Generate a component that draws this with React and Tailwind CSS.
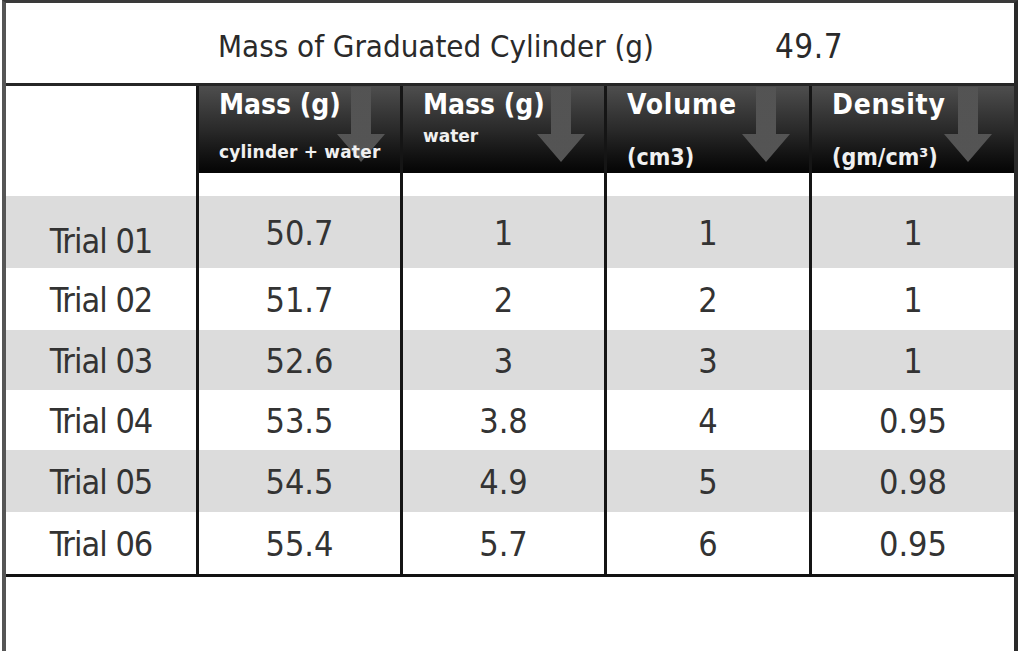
import React from "react";

const Arrow = ({ className }) => (
  <svg
    className={className}
    width="48"
    height="75"
    viewBox="0 0 48 75"
    aria-hidden="true"
  >
    <defs>
      <linearGradient id="ag" x1="0" y1="0" x2="0" y2="1">
        <stop offset="0" stopColor="#555555" />
        <stop offset="1" stopColor="#666666" />
      </linearGradient>
    </defs>
    <path d="M14 0 H34 V47 H48 L24 75 L0 47 H14 Z" fill="url(#ag)" opacity="0.8" />
  </svg>
);

const rows = [
  ["Trial 01", "50.7", "1", "1", "1", "h-[72px]", "bg-[#dcdcdc]", true],
  ["Trial 02", "51.7", "2", "2", "1", "h-[62px]", "bg-white", false],
  ["Trial 03", "52.6", "3", "3", "1", "h-[60px]", "bg-[#dcdcdc]", false],
  ["Trial 04", "53.5", "3.8", "4", "0.95", "h-[60px]", "bg-white", false],
  ["Trial 05", "54.5", "4.9", "5", "0.98", "h-[62px]", "bg-[#dcdcdc]", false],
  ["Trial 06", "55.4", "5.7", "6", "0.95", "h-[62px]", "bg-white", false],
];

const colW = ["w-[204px]", "w-[204px]", "w-[205px]", "w-[205px]"];

const cond = "font-['DejaVu_Sans_Condensed','DejaVu_Sans',sans-serif] font-stretch-condensed";

export default function App() {
  return (
    <div className="w-[1024px] h-[651px] bg-white overflow-hidden pl-[2px]">
      <div className="w-[1016px] h-[651px] flex flex-col border-l-4 border-l-[#555] border-r-4 border-r-[#2a2a2a] border-t-[3px] border-t-[#3a3a3a]">
        {/* Top title */}
        <div className={`h-[80px] shrink-0 flex items-start pt-[28px] text-[31px] leading-none text-[#2a2a2a] ${cond}`}>
          <span className="ml-[212px]">Mass of Graduated Cylinder (g)</span>
          <span className="ml-[121px] text-[33px] leading-none -mt-[1px] tracking-[0.5px]">49.7</span>
        </div>
        <div className="h-[3px] shrink-0 bg-[#262626]" />

        {/* Header */}
        <div className="h-[87px] shrink-0 flex">
          <div className="w-[190px] shrink-0 bg-white" />
          {[
            { t: "Mass (g)", tr: "tracking-[0px]", s: "cylinder + water", sc: "mt-[25px] text-[17px] tracking-[0.2px]", ar: "right-[15px]" },
            { t: "Mass (g)", tr: "tracking-[0px]", s: "water", sc: "mt-[9px] text-[17px]", ar: "right-[19px]" },
            { t: "Volume", tr: "tracking-[0.8px]", s: "(cm3)", sc: "mt-[27px] text-[23px]", ar: "right-[19px]" },
            { t: "Density", tr: "tracking-[0.8px]", s: "(gm/cm³)", sc: "mt-[27px] text-[23px]", ar: "right-[22px]" },
          ].map((h, i) => (
            <div
              key={i}
              className={`${colW[i]} shrink-0 border-l-[3px] border-[#151515] relative bg-linear-to-b from-[#4e4e4e] via-[#2a2a2a] to-[#050505] pt-[5px] pl-[20px]`}
            >
              <Arrow className={`absolute top-[1px] ${h.ar}`} />
              <div className={`relative text-white font-bold text-[28px] leading-none ${h.tr} ${cond}`}>
                {h.t}
              </div>
              <div
                className={`relative text-[#f0f0f0] font-bold leading-none ${h.sc} ${
                  i < 2 ? "font-['DejaVu_Sans',sans-serif]" : cond
                }`}
              >
                {h.s}
              </div>
            </div>
          ))}
        </div>

        {/* Spacer white row */}
        <div className="h-[23px] shrink-0 flex bg-white">
          <div className="w-[190px] shrink-0" />
          {colW.map((w, i) => (
            <div key={i} className={`${w} shrink-0 border-l-[3px] border-[#151515]`} />
          ))}
        </div>

        {/* Data rows */}
        {rows.map((r, ri) => (
          <div key={ri} className={`${r[5]} ${r[6]} shrink-0 flex text-[34px] leading-none text-[#333] ${cond}`}>
            <div
              className={`w-[190px] shrink-0 flex justify-center items-center tracking-[-1px] ${
                r[7] ? "pt-[17px]" : "pt-[2px]"
              }`}
            >
              {r[0]}
            </div>
            {[r[1], r[2], r[3], r[4]].map((v, ci) => (
              <div
                key={ci}
                className={`${colW[ci]} shrink-0 border-l-[3px] border-[#151515] flex items-center justify-center pt-[2px]`}
              >
                {v}
              </div>
            ))}
          </div>
        ))}

        <div className="h-[3px] shrink-0 bg-[#111]" />
        <div className="flex-1 bg-white" />
      </div>
    </div>
  );
}
